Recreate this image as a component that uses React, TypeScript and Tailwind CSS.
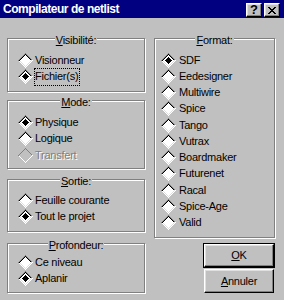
import React from 'react';

// pixel diamond radio, 15x15, drawn as horizontal runs
function Diamond({ checked = false, disabled = false }: { checked?: boolean; disabled?: boolean }) {
  const runs: React.ReactNode[] = [];
  for (let y = 0; y < 15; y++) {
    let start = -1;
    let prev = '';
    for (let x = 0; x <= 15; x++) {
      let color = '';
      if (x < 15) {
        const d = Math.abs(x - 7) + Math.abs(y - 7);
        const top = y < 7 || (y === 7 && x < 7);
        if (d === 7) color = top ? '#808080' : '#ffffff';
        else if (d === 6) color = disabled ? '#c0c0c0' : top ? '#000000' : '#dfdfdf';
        else if (d < 6) color = checked && d <= 3 ? '#000000' : disabled ? '#c0c0c0' : '#ffffff';
      }
      if (color !== prev) {
        if (prev) runs.push(<rect key={`${y}-${start}`} x={start} y={y} width={x - start} height={1} fill={prev} />);
        start = x;
        prev = color;
      }
    }
  }
  return (
    <svg width="15" height="15" viewBox="0 0 15 15" className="shrink-0" shapeRendering="crispEdges">
      {runs}
    </svg>
  );
}

function CloseGlyph() {
  const rows = ['XX....XX', '.XX..XX.', '..XXXX..', '...XX...', '..XXXX..', '.XX..XX.', 'XX....XX'];
  return (
    <svg width="8" height="7" viewBox="0 0 8 7" shapeRendering="crispEdges">
      {rows.map((r, y) =>
        r.split('').map((c, x) => (c === 'X' ? <rect key={`${x}-${y}`} x={x} y={y} width={1} height={1} fill="#000" /> : null))
      )}
    </svg>
  );
}

function TitleButton({ children }: { children: React.ReactNode }) {
  return (
    <div className="w-[16px] h-[14px] bg-[#c0c0c0] flex items-center justify-center border border-t-white border-l-white border-r-black border-b-black shadow-[inset_-1px_-1px_0_#808080,inset_1px_1px_0_#dfdfdf]">
      {children}
    </div>
  );
}

function Group({ label, className, children }: { label: React.ReactNode; className: string; children: React.ReactNode }) {
  return (
    <div className={`relative border border-[#808080] shadow-[inset_1px_1px_0_#fff,1px_1px_0_#fff] ${className}`}>
      <div className="absolute inset-x-0 top-[-5px] flex justify-center">
        <span className="bg-[#c0c0c0] px-[1px]">{label}</span>
      </div>
      {children}
    </div>
  );
}

function Radio({ label, checked, disabled, focus, wide }: { label: React.ReactNode; checked?: boolean; disabled?: boolean; focus?: boolean; wide?: boolean }) {
  return (
    <div className={wide ? 'flex items-center h-[16.25px] pl-[6px] gap-[3px]' : 'flex items-center h-[16.5px] pl-[10px] gap-[2px]'}>
      <Diamond checked={checked} disabled={disabled} />
      {focus ? (
        <span className="ml-[-1px] h-[18px] flex items-center border border-dotted border-black pr-[1px]">{label}</span>
      ) : (
        <span className={disabled ? 'text-[#808080] [text-shadow:1px_1px_0_#fff]' : ''}>{label}</span>
      )}
    </div>
  );
}

const formats = ['SDF', 'Eedesigner', 'Multiwire', 'Spice', 'Tango', 'Vutrax', 'Boardmaker', 'Futurenet', 'Racal', 'Spice-Age', 'Valid'];

export default function App() {
  return (
    <div className="w-[284px] h-[300px] overflow-hidden bg-[#c0c0c0] text-black [font-family:'Liberation_Sans',Arial,sans-serif] text-[11px] leading-[13px] tracking-[-0.25px]">
      {/* Title bar */}
      <div className="h-[18px] bg-[#000080] flex items-start">
        <div className="pl-[3px] text-white font-bold text-[12px] leading-[18px] tracking-[-0.45px]">Compilateur de netlist</div>
        <div className="ml-auto flex gap-[2px] pt-[3px] pr-[4px]">
          <TitleButton>
            <span className="font-bold text-[13px] leading-[12px] tracking-normal">?</span>
          </TitleButton>
          <TitleButton>
            <CloseGlyph />
          </TitleButton>
        </div>
      </div>

      <div className="flex gap-[9px] pl-[7px] pt-[20px]">
        {/* Left column */}
        <div className="w-[138px] flex flex-col">
          <Group className="h-[54px] pt-[13px]" label={<><span className="underline">V</span>isibilité:</>}>
            <Radio label="Visionneur" />
            <Radio label="Fichier(s)" checked focus />
          </Group>
          <Group className="mt-[8px] h-[69px] pt-[13px]" label={<><span className="underline">M</span>ode:</>}>
            <Radio label="Physique" checked />
            <Radio label="Logique" />
            <Radio label="Transfert" disabled />
          </Group>
          <Group className="mt-[10px] h-[53px] pt-[12px]" label={<><span className="underline">S</span>ortie:</>}>
            <Radio label="Feuille courante" />
            <Radio label="Tout le projet" checked />
          </Group>
          <Group className="mt-[11px] h-[50px] pt-[10px]" label={<><span className="underline">P</span>rofondeur:</>}>
            <Radio label="Ce niveau" />
            <Radio label="Aplanir" checked />
          </Group>
        </div>

        {/* Right column */}
        <div className="w-[121px] flex flex-col items-end">
          <Group className="w-full h-[200px] pt-[13px]" label={<><span className="underline">F</span>ormat:</>}>
            {formats.map((f, i) => (
              <Radio key={f} label={f} checked={i === 0} wide />
            ))}
          </Group>
          <div className="mt-[5px] w-[72px] h-[25px] border border-black">
            <div className="h-full flex items-center justify-center border border-t-white border-l-white border-r-black border-b-black shadow-[inset_-1px_-1px_0_#808080,inset_1px_1px_0_#dfdfdf]">
              <span><span className="underline">O</span>K</span>
            </div>
          </div>
          <div className="mt-[1px] mr-[1px] w-[70px] h-[24px] flex items-center justify-center border border-t-white border-l-white border-r-black border-b-black shadow-[inset_-1px_-1px_0_#808080,inset_1px_1px_0_#dfdfdf]">
            <span><span className="underline">A</span>nnuler</span>
          </div>
        </div>
      </div>
    </div>
  );
}
